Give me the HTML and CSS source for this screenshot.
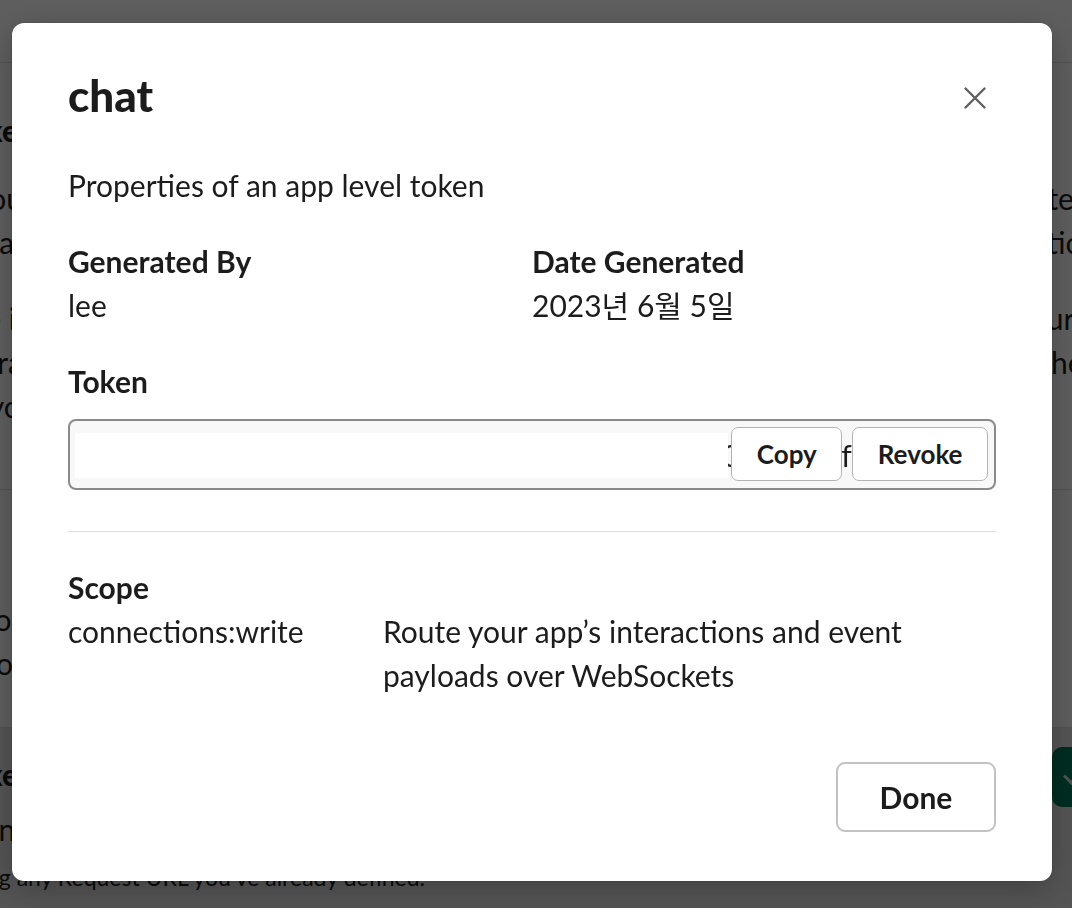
FILE: index.html
```html
<!DOCTYPE html>
<html lang="en">
<head>
<meta charset="utf-8">
<title>chat – App-Level Token</title>
<link rel="stylesheet" href="styles.css">
</head>
<body>
<div class="page">
  <div class="page-head"><h1 class="page-title">Socket Mode for various features</h1></div>
  <section class="sec sec-one">
    <h2 class="sec-title">Connect using Socket Mode to receive your app’s payloads share</h2>
    <p class="sec-text">
      <span class="ln">Socket Mode lets your app communicate without exposing a public HTTP endpoint to the world. Instead, your app uses WebSockets apps</span>
      <span class="ln">to receive the payloads from interactive components, slash commands and events through a connection that is kept open spec</span>
    </p>
    <p class="sec-text">
      <span class="ln">When Socket Mode is enabled, your app will use a WebSocket connection that will be opened by your app’s code and will be secured by</span>
      <span class="ln">a token that is generated from your app’s settings, which will all be routed to your app instead of to the Request URL you</span>
      <span class="ln">those settings, but your app will continue</span>
    </p>
  </section>
  <section class="sec sec-two">
    <h2 class="sec-title">Enable Socket Mo</h2>
    <p class="sec-text">
      <span class="ln">Your app’s connections ar</span>
      <span class="ln">Learn more about Sock<a class="bg-link" href="#">et Mode in</a></span>
    </p>
  </section>
  <section class="sec sec-three">
    <div class="sec-three-text">
      <h2 class="sec-title">Connect using Socke</h2>
      <p class="sec-text">
        <span class="ln">Turning this on means y</span>
        <span class="ln ln-end"><span>will be routed to your app instead of overriding any Request URL you’ve already defined.</span></span>
      </p>
    </div>
    <div class="toggle"><span class="toggle-check"></span></div>
  </section>
</div>

<div class="overlay"></div>

<div class="modal" role="dialog" aria-labelledby="modal-title">
  <header class="modal-head">
    <h1 class="modal-title" id="modal-title">chat</h1>
    <button class="close" aria-label="Close">
      <svg width="22" height="22" viewBox="0 0 22 22" aria-hidden="true">
        <path d="M1.5 1.5 L20.5 20.5 M20.5 1.5 L1.5 20.5" stroke="#616061" stroke-width="2.4" stroke-linecap="round" fill="none"/>
      </svg>
    </button>
  </header>

  <div class="modal-body">
    <p class="intro">Properties of an app level token</p>

    <div class="meta">
      <div class="meta-item">
        <div class="label">Generated By</div>
        <div class="value">lee</div>
      </div>
      <div class="meta-item">
        <div class="label">Date Generated</div>
        <div class="value">2023년 6월 5일</div>
      </div>
    </div>

    <div class="label token-label">Token</div>
    <div class="token-field">
      <span class="token-text">xapp-1-A05BQ7XXXXX-5385XXXXXXXXX-4c9a0e8d7b6f5a4c3b2a1d0e9f8ab7c6d5e0b1c0):01</span>
      <span class="mask"></span>
      <div class="token-actions">
        <button class="btn-sm">Copy</button>
        <button class="btn-sm">Revoke</button>
      </div>
    </div>

    <hr class="divider">

    <div class="label">Scope</div>
    <div class="scope-row">
      <div class="scope-name">connections:write</div>
      <div class="scope-desc">Route your app’s interactions and event payloads over WebSockets</div>
    </div>
  </div>

  <footer class="modal-foot">
    <button class="done">Done</button>
  </footer>
</div>
</body>
</html>
```

FILE: styles.css
```css
* { box-sizing: border-box; }

html, body {
  margin: 0;
  padding: 0;
  height: 100%;
  overflow: hidden;
}

body {
  background: #ffffff;
  font-family: Lato, "Noto Sans CJK KR", sans-serif;
  color: #1d1c1d;
}

/* ---------- background page ---------- */
.page {
  margin-left: -260px;
  width: 1600px;
  font-size: 30px;
  line-height: 44px;
}

.page-head {
  height: 63px;
  border-bottom: 1px solid #dddddd;
  overflow: hidden;
}

.page-title {
  margin: -45px 0 0 200px;
  font-size: 52px;
  line-height: 48px;
  font-weight: 900;
}

.sec {
  border-bottom: 1px solid #dddddd;
}

.sec-title {
  margin: 0;
  font-size: 30px;
  line-height: 44px;
  font-weight: 900;
  white-space: nowrap;
}

.sec-text {
  margin: 0;
}

.ln {
  display: block;
  white-space: nowrap;
}

.ln-end {
  display: flex;
  justify-content: flex-end;
  width: 685px;
  font-size: 23px;
}

.sec-one {
  padding: 45px 0 62px;
  height: 427px;
}
.sec-one .sec-text:first-of-type { margin-top: 24px; }
.sec-one .sec-text + .sec-text { margin-top: 32px; }

.sec-two {
  padding: 37px 0 0;
  height: 238px;
}
.sec-two .sec-text { margin-top: 26px; }

.bg-link { color: #1264a3; text-decoration: none; }

.sec-three {
  display: flex;
  justify-content: space-between;
  align-items: flex-start;
  padding: 24px 168px 0 0;
  height: 240px;
  border-bottom: none;
  background: #e4e4e4;
}
.sec-three .sec-text { margin-top: 11px; }
.sec-three .sec-text .ln + .ln { margin-top: 4px; }

.toggle {
  margin-top: -5px;
  width: 120px;
  height: 60px;
  border-radius: 10px;
  background: #007a5a;
  position: relative;
}
.toggle-check {
  position: absolute;
  left: 12px;
  top: 20px;
  width: 22px;
  height: 12px;
  border-left: 3px solid #ffffff;
  border-bottom: 3px solid #ffffff;
  transform: rotate(-45deg);
  opacity: 0.8;
}

/* ---------- overlay ---------- */
.overlay {
  position: fixed;
  inset: 0;
  background: rgba(0, 0, 0, 0.63);
}

/* ---------- modal ---------- */
.modal {
  position: fixed;
  left: 12px;
  top: 23px;
  width: 1040px;
  height: 858px;
  background: #ffffff;
  border-radius: 12px;
  box-shadow: 0 0 0 1px rgba(0,0,0,0.08), 0 8px 32px rgba(0,0,0,0.25);
  padding: 47px 56px 49px;
  display: flex;
  flex-direction: column;
  font-size: 30px;
  line-height: 44px;
  color: #1d1c1d;
}

.modal-head {
  display: flex;
  align-items: center;
  justify-content: space-between;
  height: 50px;
}

.modal-title {
  margin: 0;
  font-size: 44px;
  line-height: 50px;
  font-weight: 900;
}

.close {
  width: 42px;
  height: 42px;
  margin-top: 6px;
  border: 0;
  padding: 0;
  background: transparent;
  display: flex;
  align-items: center;
  justify-content: center;
  cursor: pointer;
}

.modal-body {
  display: flex;
  flex-direction: column;
}

.intro {
  margin: 43px 0 0;
}

.meta {
  margin-top: 32px;
  display: grid;
  grid-template-columns: 1fr 1fr;
}

.label {
  font-weight: 700;
}

.token-label {
  margin-top: 32px;
}

.token-field {
  position: relative;
  margin-top: 16px;
  height: 71px;
  border: 2px solid #8a8a8a;
  border-radius: 8px;
  background: #f8f8f8;
  overflow: hidden;
  display: flex;
  align-items: center;
  padding-left: 6px;
}

.token-text {
  display: block;
  width: 778px;
  overflow: hidden;
  white-space: nowrap;
  font-size: 30px;
  color: #1d1c1d;
}

.mask {
  position: absolute;
  left: 5px;
  top: 12px;
  width: 653px;
  height: 45px;
  background: #ffffff;
}

.token-actions {
  position: absolute;
  right: 6px;
  top: 6px;
  display: flex;
  gap: 10px;
}

.btn-sm {
  height: 54px;
  padding: 0 24.5px;
  border: 1.5px solid #b3b3b3;
  border-radius: 7px;
  background: #ffffff;
  font-family: Lato, sans-serif;
  font-size: 26px;
  font-weight: 700;
  color: #1d1c1d;
  cursor: pointer;
}

.divider {
  margin: 41px 0 0;
  border: 0;
  border-top: 1px solid #dddddd;
  height: 0;
}

.divider + .label {
  margin-top: 33px;
}

.scope-row {
  display: grid;
  grid-template-columns: 315px 1fr;
}

.scope-desc {
  max-width: 560px;
}

.modal-foot {
  margin-top: auto;
  display: flex;
  justify-content: flex-end;
}

.done {
  width: 160px;
  height: 70px;
  border: 2px solid #c2c2c2;
  border-radius: 9px;
  background: #ffffff;
  font-family: Lato, sans-serif;
  font-size: 30px;
  font-weight: 700;
  color: #1d1c1d;
  cursor: pointer;
}
```
